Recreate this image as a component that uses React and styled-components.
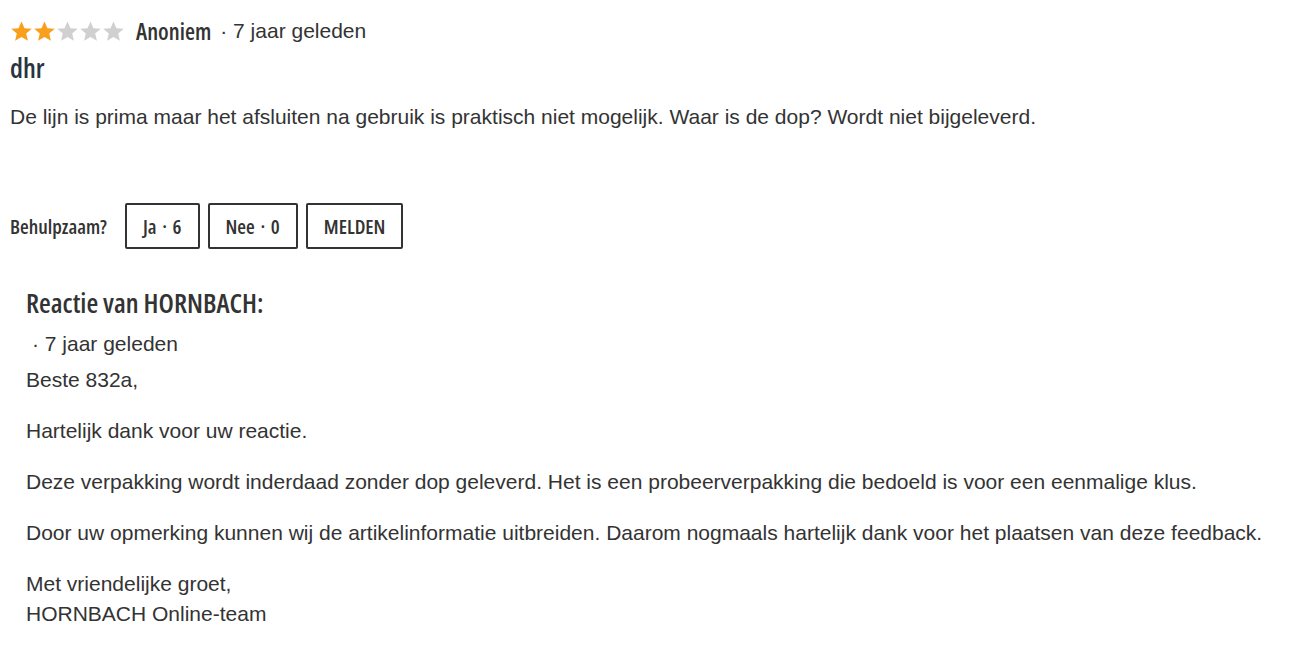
import React from "react";
import styled, { createGlobalStyle } from "styled-components";

const GlobalStyle = createGlobalStyle`
  body {
    margin: 0;
    background: #ffffff;
    color: #333333;
    font-family: "Liberation Sans", Arial, sans-serif;
  }
`;

const Star = ({ filled }) => (
  <StarSvg viewBox="0 0 24 24" filled={filled ? 1 : 0}>
    <path d="M12 1.5l3.1 7.1 7.6.6-5.8 5 1.8 7.5L12 17.7l-6.7 4 1.8-7.5-5.8-5 7.6-.6z" />
  </StarSvg>
);

export default function App() {
  const rating = 2;
  return (
    <Page>
      <GlobalStyle />
      <Header>
        <Stars>
          {[1, 2, 3, 4, 5].map((i) => (
            <Star key={i} filled={i <= rating} />
          ))}
        </Stars>
        <Author>Anoniem</Author>
        <Meta>· 7 jaar geleden</Meta>
      </Header>
      <Title>dhr</Title>
      <Text>
        De lijn is prima maar het afsluiten na gebruik is praktisch niet mogelijk. Waar is de dop? Wordt niet bijgeleverd.
      </Text>
      <Helpful>
        <HelpLabel>Behulpzaam?</HelpLabel>
        <VoteButton>Ja · 6</VoteButton>
        <VoteButton>Nee · 0</VoteButton>
        <VoteButton>MELDEN</VoteButton>
      </Helpful>
      <Reply>
        <ReplyTitle>Reactie van HORNBACH:</ReplyTitle>
        <ReplyMeta>· 7 jaar geleden</ReplyMeta>
        <ReplyText>Beste 832a,</ReplyText>
        <ReplyText>Hartelijk dank voor uw reactie.</ReplyText>
        <ReplyText>
          Deze verpakking wordt inderdaad zonder dop geleverd. Het is een probeerverpakking die bedoeld is voor een eenmalige klus.
        </ReplyText>
        <ReplyText>
          Door uw opmerking kunnen wij de artikelinformatie uitbreiden. Daarom nogmaals hartelijk dank voor het plaatsen van deze feedback.
        </ReplyText>
        <ReplyText>
          Met vriendelijke groet,
          <br />
          HORNBACH Online-team
        </ReplyText>
      </Reply>
    </Page>
  );
}

const condensed = `"Open Sans", "DejaVu Sans Condensed", sans-serif`;

const Page = styled.div`
  padding: 18px 10px 0 10px;
`;

const Header = styled.div`
  display: flex;
  align-items: center;
  height: 26px;
`;

const Stars = styled.div`
  display: flex;
  margin-right: 11px;
`;

const StarSvg = styled.svg`
  width: 23px;
  height: 23px;
  fill: ${(p) => (p.filled ? "#f99f1e" : "#d0d0d0")};
`;

const Author = styled.span`
  font-family: ${condensed};
  font-stretch: 75%;
  font-weight: 600;
  font-size: 23px;
  color: #333333;
  margin-right: 9px;
`;

const Meta = styled.span`
  font-size: 21px;
  color: #333333;
`;

const Title = styled.h3`
  margin: 8px 0 0 0;
  font-family: ${condensed};
  font-stretch: 75%;
  font-weight: 600;
  font-size: 27px;
  line-height: 32px;
  color: #2a3340;
`;

const Text = styled.p`
  margin: 18px 0 0 0;
  font-size: 21px;
  line-height: 30px;
`;

const Helpful = styled.div`
  display: flex;
  align-items: center;
  gap: 8px;
  margin-top: 71px;
`;

const HelpLabel = styled.span`
  font-family: ${condensed};
  font-stretch: 75%;
  font-weight: 600;
  font-size: 20px;
  margin-right: 10px;
`;

const VoteButton = styled.button`
  height: 46px;
  padding: 0 16px;
  background: #ffffff;
  border: 2px solid #333333;
  border-radius: 2px;
  font-family: ${condensed};
  font-stretch: 75%;
  font-weight: 600;
  font-size: 20px;
  word-spacing: 2px;
  color: #333333;
`;

const Reply = styled.div`
  padding: 38px 16px 0 16px;
`;

const ReplyTitle = styled.h4`
  margin: 0;
  font-family: ${condensed};
  font-stretch: 75%;
  font-weight: 600;
  font-size: 27px;
  line-height: 32px;
  color: #333333;
`;

const ReplyMeta = styled.div`
  margin: 10px 0 6px 6px;
  font-size: 21px;
  line-height: 30px;
`;

const ReplyText = styled.p`
  margin: 0 0 21px 0;
  font-size: 21px;
  line-height: 30px;
`;
